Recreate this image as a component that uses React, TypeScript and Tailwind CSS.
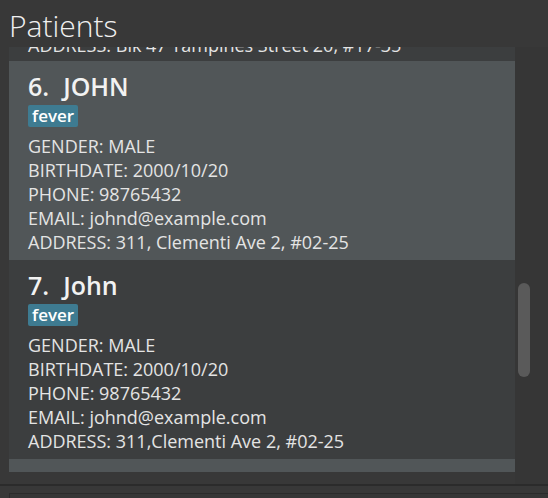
const patients = [
  {
    id: 6,
    name: "JOHN",
    tags: ["fever"],
    gender: "MALE",
    birthdate: "2000/10/20",
    phone: "98765432",
    email: "johnd@example.com",
    address: "311, Clementi Ave 2, #02-25",
  },
  {
    id: 7,
    name: "John",
    tags: ["fever"],
    gender: "MALE",
    birthdate: "2000/10/20",
    phone: "98765432",
    email: "johnd@example.com",
    address: "311,Clementi Ave 2, #02-25",
  },
];

type Patient = (typeof patients)[number];

function PatientCard({ patient, odd }: { patient: Patient; odd: boolean }) {
  return (
    <div
      className={[
        "h-[199px] shrink-0 pt-[9px] pl-[19px]",
        odd ? "bg-[#515658]" : "bg-[#3c3e3f]",
      ].join(" ")}
    >
      <div className="flex h-[33px] items-center gap-[14px] text-[25px] font-[550] text-[#f2f2f2]">
        <span>{patient.id}.</span>
        <span>{patient.name}</span>
      </div>
      <div className="mt-[2px] mb-[7px] flex gap-1">
        {patient.tags.map((tag) => (
          <span
            key={tag}
            className="h-[22px] rounded-[2px] bg-[#3e7b91] px-[4px] text-[17px] leading-[22px] font-semibold text-white"
          >
            {tag}
          </span>
        ))}
      </div>
      <div className="text-[18px] leading-[24px] text-[#e4e4e4]">
        <p>GENDER: {patient.gender}</p>
        <p>BIRTHDATE: {patient.birthdate}</p>
        <p>PHONE: {patient.phone}</p>
        <p>EMAIL: {patient.email}</p>
        <p>ADDRESS: {patient.address}</p>
      </div>
    </div>
  );
}

export default function App() {
  return (
    <div className="flex h-[498px] w-[548px] flex-col overflow-hidden bg-[#383838] font-['Open_Sans','Noto_Sans',sans-serif]">
      <h1 className="h-[47px] shrink-0 pl-[9px] pt-[8px] text-[30px] leading-[36px] font-light text-[#f0f0f0]">
        Patients
      </h1>

      <div className="flex h-[437px] shrink-0 pl-[9px]">
        <div className="flex w-[506px] flex-col">
          <div className="flex h-[425px] flex-col overflow-hidden">
            {/* last line of card 5, scrolled mostly out of view */}
            <div className="flex h-[14px] shrink-0 items-end overflow-hidden bg-[#3c3e3f] pl-[19px]">
              <p className="shrink-0 pb-[4px] text-[18px] leading-[24px] text-[#e4e4e4]">
                ADDRESS: Blk 47 Tampines Street 20, #17-35
              </p>
            </div>
            {patients.map((p, i) => (
              <PatientCard key={p.id} patient={p} odd={i % 2 === 0} />
            ))}
            <div className="h-[14px] shrink-0 bg-[#515658]" />
          </div>
        </div>
        <div className="relative w-[33px] bg-[#363636]">
          <div className="absolute left-[3px] top-[236px] h-[94px] w-[12px] rounded-[6px] bg-[#5a5a5a]" />
        </div>
      </div>

      <div className="h-[2px] shrink-0 bg-[#2b2b2b]" />
      <div className="h-[7px] shrink-0" />
      <div className="ml-[9px] flex-1 border-l border-t border-[#2b2b2b] bg-[#363636]" />
    </div>
  );
}
